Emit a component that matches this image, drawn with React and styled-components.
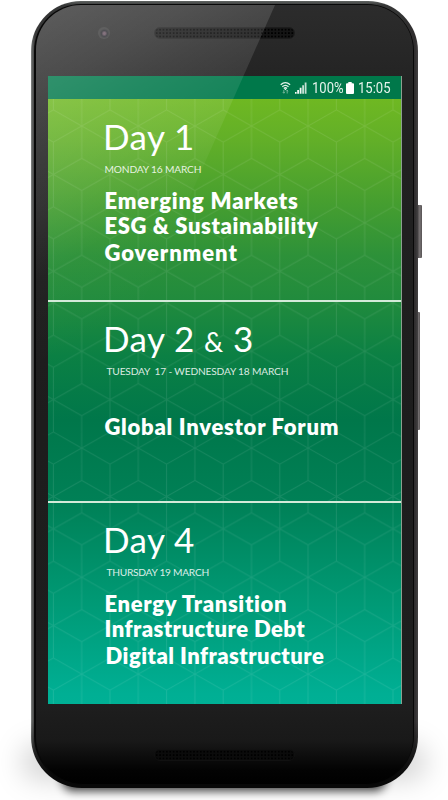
import React from "react";
import styled, { createGlobalStyle } from "styled-components";

const GlobalStyle = createGlobalStyle`
  html, body { margin: 0; padding: 0; background: #fff; }
  * { box-sizing: border-box; }
`;

const Stage = styled.main`
  position: relative;
  width: 448px;
  height: 800px;
  padding: 1px 0 0 31px;
  overflow: hidden;
  background: #fff;
  font-family: Lato, "Open Sans", sans-serif;
`;

const FloorShadow = styled.div`
  position: absolute;
  left: ${(p) => p.$x}px;
  top: ${(p) => p.$y}px;
  width: ${(p) => p.$w}px;
  height: ${(p) => p.$h}px;
  border-radius: 40px;
  background: rgba(0, 0, 0, ${(p) => p.$alpha});
  filter: blur(${(p) => p.$blur}px);
`;

const SideKey = styled.div`
  position: absolute;
  left: 417px;
  top: ${(p) => p.$top}px;
  width: ${(p) => p.$width}px;
  height: ${(p) => p.$height}px;
  border-radius: 0 1px 1px 0;
  background: linear-gradient(90deg, #3b3738, #777374 55%, #565253);
`;

const Rim = styled.div`
  position: relative;
  width: 387px;
  height: 787px;
  padding: 3px 4px 3px 3px;
  border-radius: 50px 50px 51px 51px;
  background:
    linear-gradient(180deg, rgba(8, 8, 8, 0) 720px, #080808 780px),
    linear-gradient(90deg, #8c8f8e 0, #626463 1px, #3a3a3a 4px, rgba(50, 50, 50, 0) 18px, rgba(50, 50, 50, 0) 370px, #302e2f 384px, #434142 387px),
    linear-gradient(180deg, #626664 0, #363737 4px, #262626 60px, #202020 780px, #080808 787px);
`;

const Groove = styled.div`
  height: 100%;
  padding: 1px 1px 1px 2px;
  border-radius: 47px 47px 49px 49px;
  background: #080808;
`;

const Face = styled.div`
  height: 100%;
  display: flex;
  flex-direction: column;
  align-items: center;
  border-radius: 45px 45px 47px 47px;
  overflow: hidden;
  background: linear-gradient(180deg, #2c2c2c 0, #222 90px, #1d1d1d 420px, #1e1e1e 700px, #191919 735px, #030303 765px, #000 779px);
`;

const TopBezel = styled.div`
  height: 71px;
  width: 100%;
  padding: 22px 0 0 62px;
  display: flex;
  gap: 44px;
`;

const BottomBezel = styled.div`
  flex: 1;
  width: 100%;
  display: flex;
  justify-content: center;
  padding: 45px 0 0 0;
`;

const Lens = styled.div`
  width: 12px;
  height: 12px;
  border-radius: 50%;
  background: radial-gradient(circle at 53% 54%, #67515f 0 1px, #25252b 3px, #303032 4px, #393939 5px);
`;

const Grille = styled.div`
  width: 141px;
  height: 12px;
  border-radius: 6px;
  border: 1px solid ${(p) => (p.$dark ? "#111" : "#1c1c1c")};
  background: radial-gradient(circle, #000 0.8px, ${(p) => (p.$dark ? "#0b0b0b" : "#151515")} 1.3px) 0 0 / 3.4px 3.4px;
`;

const Screen = styled.section`
  width: 354px;
  height: 628px;
  display: flex;
  flex-direction: column;
  border-right: 1px solid #8ba08f;
  background: linear-gradient(180deg, #6fb822 23px, #62af28 65px, #479f2f 124px, #2d9139 180px, #218b3d 224px, #0b8044 280px, #00774a 344px, #008056 425px, #009873 520px, #00af94 618px, #00b095 628px);
`;

const StatusBar = styled.header`
  height: 23px;
  padding: 1px 10px 0 0;
  display: flex;
  align-items: center;
  justify-content: flex-end;
  background: #00784a;
  color: #e6f3ec;
  font: 400 15px/20px Roboto, sans-serif;
`;

const StatusText = styled.span`
  width: ${(p) => p.$width}px;
  margin-left: ${(p) => p.$gap}px;
  white-space: nowrap;
  transform: scaleX(0.87);
  transform-origin: 0 50%;
`;

const Panel = styled.article`
  position: relative;
  height: ${(p) => p.$height}px;
  padding: ${(p) => p.$top}px 0 0 57px;
  border-bottom: ${(p) => (p.$last ? "none" : "2px solid #d4ead9")};
  color: #fff;
  overflow: hidden;
`;

const Mesh = styled.svg`
  position: absolute;
  inset: 0;
  width: 100%;
  height: 100%;
`;

const Title = styled.h1`
  position: relative;
  height: 42px;
  margin: 0 0 ${(p) => p.$below}px -1.5px;
  font-size: 35px;
  line-height: 42px;
  font-weight: 400;
  letter-spacing: 0.4px;
  white-space: pre;
`;

const Ampersand = styled.span`
  font-size: 27px;
  line-height: 0;
`;

const DateLine = styled.p`
  position: relative;
  margin: 0 0 ${(p) => p.$below}px ${(p) => p.$inset}px;
  font-size: 10.2px;
  line-height: 14px;
  letter-spacing: ${(p) => p.$track}px;
  color: rgba(255, 255, 255, 0.86);
  white-space: pre;
`;

const Topic = styled.p`
  position: relative;
  margin: 0 0 ${(p) => p.$below || 0}px ${(p) => p.$inset || 0}px;
  font-size: 22px;
  line-height: 25px;
  font-weight: 800;
  letter-spacing: ${(p) => p.$track}px;
  white-space: pre;
`;

const Glare = styled.svg`
  position: absolute;
  left: 36px;
  top: 5px;
  width: 377px;
  height: 779px;
  pointer-events: none;
`;

/* Tiling of cubes: every hub in the tile has six spokes. */
function CubeMesh({ id, y }) {
  const r = 32.27;
  const hub = (cx, cy) =>
    `M${cx} ${cy - r}V${cy + r}M${cx - 28.3} ${cy - r / 2}L${cx + 28.3} ${cy + r / 2}M${cx - 28.3} ${cy + r / 2}L${cx + 28.3} ${cy - r / 2}`;
  const hubs = [[0, 0], [56.6, 0], [28.3, 48.4], [0, 96.8], [56.6, 96.8]];
  return (
    <Mesh aria-hidden="true">
      <defs>
        <pattern id={id} width="56.6" height="96.8" patternUnits="userSpaceOnUse" patternTransform={`translate(316.7 ${y})`}>
          <path d={hubs.map(([a, b]) => hub(a, b)).join("")} fill="none" stroke="#fff" strokeOpacity="0.095" strokeWidth="1" />
        </pattern>
      </defs>
      <rect width="100%" height="100%" fill={`url(#${id})`} />
    </Mesh>
  );
}

function StatusIcons() {
  return (
    <svg width="28" height="14" viewBox="0 0 28 14" fill="none">
      <g stroke="#e6f3ec" strokeWidth="1.3">
        <path d="M.7 3.7Q5.4-.5 10.1 3.7M2.3 5.7Q5.4 3 8.5 5.7M3.8 7.4Q5.4 6 7 7.4" />
      </g>
      <path d="m5.4 9.2-1.3-1.5h2.6z" fill="#fff" />
      <path d="M3.8 9v3.2M2.8 11.2l1 1 1-1M7.2 12.5V9.2M6.2 10.2l1-1 1 1" stroke="#8fc4ac" strokeWidth=".8" />
      <path d="M15 11h1.6v1.8H15zM17.2 9h1.8v3.8h-1.8zM19.7 6.7h1.8v6.1h-1.8z" fill="#f2f8f5" />
      <path d="M22.2 4.3H24v8.5h-1.8zM24.7 1.5h1.8v11.3h-1.8z" fill="#c3e0d3" />
    </svg>
  );
}

function BatteryIcon() {
  return (
    <svg width="8" height="12" viewBox="0 0 8 12">
      <path d="M2.3 0h3.4v1.2H7q1 0 1 1V11q0 1-1 1H1q-1 0-1-1V2.2q0-1 1-1h1.3z" fill="#fff" />
    </svg>
  );
}

export default function App() {
  return (
    <Stage>
      <GlobalStyle />
      <FloorShadow $x={22} $y={745} $w={404} $h={34} $alpha={0.18} $blur={14} />
      <FloorShadow $x={62} $y={768} $w={324} $h={23} $alpha={0.75} $blur={5} />
      <SideKey $top={205} $width={5} $height={53} />
      <SideKey $top={312} $width={3} $height={118} />
      <Rim>
        <Groove>
          <Face>
            <TopBezel>
              <Lens />
              <Grille />
            </TopBezel>
            <Screen>
              <StatusBar>
                <StatusIcons />
                <StatusText $width={34} $gap={4}>100%</StatusText>
                <BatteryIcon />
                <StatusText $width={33} $gap={4}>15:05</StatusText>
              </StatusBar>
              <Panel $height={203} $top={15.5}>
                <CubeMesh id="mesh-a" y={27} />
                <Title $below={5.5}>Day 1</Title>
                <DateLine $below={11.5} $inset={0} $track={-0.17}>MONDAY 16 MARCH</DateLine>
                <Topic $track={0.83}>Emerging Markets</Topic>
                <Topic $track={0.63} $below={2}>{"ESG & Sustainability"}</Topic>
                <Topic $track={0.95}>Government</Topic>
              </Panel>
              <Panel $height={201} $top={15}>
                <CubeMesh id="mesh-b" y={49.3} />
                <Title $below={5}>Day 2 <Ampersand>&amp;</Ampersand> 3</Title>
                <DateLine $below={36} $inset={2} $track={-0.19}>TUESDAY  17 - WEDNESDAY 18 MARCH</DateLine>
                <Topic $track={0.73}>Global Investor Forum</Topic>
              </Panel>
              <Panel $height={201} $top={15} $last>
                <CubeMesh id="mesh-c" y={74.3} />
                <Title $below={5}>Day 4</Title>
                <DateLine $below={12} $inset={2} $track={-0.28}>THURSDAY 19 MARCH</DateLine>
                <Topic $track={0.65}>Energy Transition</Topic>
                <Topic $track={0.45} $below={2}>Infrastructure Debt</Topic>
                <Topic $track={0.47} $inset={1}>Digital Infrastructure</Topic>
              </Panel>
            </Screen>
            <BottomBezel>
              <Grille $dark />
            </BottomBezel>
          </Face>
        </Groove>
      </Rim>
      <Glare viewBox="36 5 377 779">
        <defs>
          <linearGradient id="shine" gradientUnits="userSpaceOnUse" x1="60" y1="0" x2="215" y2="270">
            <stop offset="0" stopColor="#fff" stopOpacity="0.23" />
            <stop offset="0.22" stopColor="#fff" stopOpacity="0.18" />
            <stop offset="0.35" stopColor="#fff" stopOpacity="0.14" />
            <stop offset="0.54" stopColor="#fff" stopOpacity="0.09" />
            <stop offset="0.74" stopColor="#fff" stopOpacity="0.02" />
            <stop offset="1" stopColor="#fff" stopOpacity="0" />
          </linearGradient>
        </defs>
        <path d="M81 5H275L86 430 36 540V50A45 45 0 0 1 81 5Z" fill="url(#shine)" />
      </Glare>
    </Stage>
  );
}
